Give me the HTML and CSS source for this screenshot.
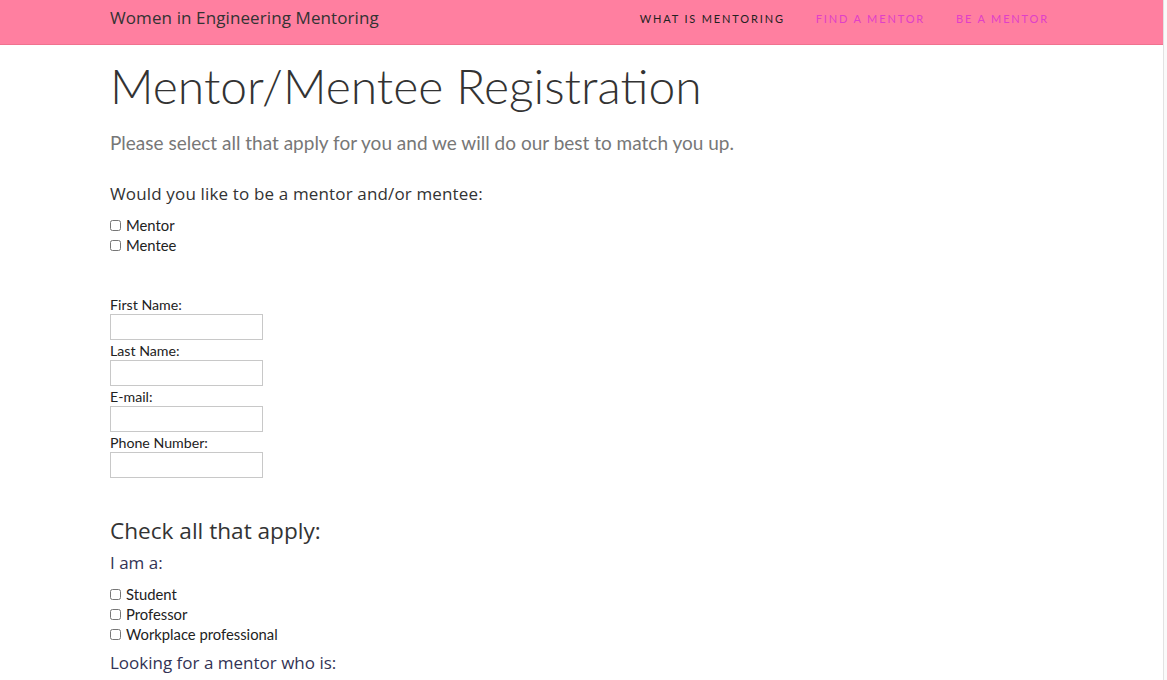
FILE: index.html
```html
<!DOCTYPE html>
<html>
<head>
<meta charset="utf-8">
<link rel="stylesheet" href="styles.css">
</head>
<body>
<div class="page">
  <nav class="navbar">
    <div class="container nav-inner">
      <a class="brand">Women in Engineering Mentoring</a>
      <ul class="nav-links">
        <li class="active">WHAT IS MENTORING</li>
        <li>FIND A MENTOR</li>
        <li>BE A MENTOR</li>
      </ul>
    </div>
  </nav>
  <main class="container">
    <h1 class="title">Mentor/Mentee Registration</h1>
    <p class="lead">Please select all that apply for you and we will do our best to match you up.</p>

    <h3 class="question">Would you like to be a mentor and/or mentee:</h3>
    <div class="checks">
      <label class="check"><input type="checkbox"> Mentor</label>
      <label class="check"><input type="checkbox"> Mentee</label>
    </div>

    <div class="fields">
      <label class="field-label">First Name:</label>
      <input class="text-input" type="text">
      <label class="field-label">Last Name:</label>
      <input class="text-input" type="text">
      <label class="field-label">E-mail:</label>
      <input class="text-input" type="text">
      <label class="field-label">Phone Number:</label>
      <input class="text-input" type="text">
    </div>

    <h2 class="section">Check all that apply:</h2>
    <h4 class="sub">I am a:</h4>
    <div class="checks">
      <label class="check"><input type="checkbox"> Student</label>
      <label class="check"><input type="checkbox"> Professor</label>
      <label class="check"><input type="checkbox"> Workplace professional</label>
    </div>
    <h4 class="sub sub2">Looking for a mentor who is:</h4>
  </main>
</div>
</body>
</html>
```
FILE: styles.css
```css
html, body {
  margin: 0;
  padding: 0;
  height: 100%;
  overflow: hidden;
  background: #fafafa;
}
body {
  font-family: Lato, "Liberation Sans", sans-serif;
  color: #333;
}
.page {
  width: 1163px;
  min-height: 100%;
  background: #fff;
  border-right: 1px solid #e2e2e2;
}
.container {
  padding-left: 110px;
  padding-right: 114px;
}
.navbar {
  background: #ff7fa0;
  border-bottom: 1px solid #f0728f;
  height: 44px;
}
.nav-inner {
  display: flex;
  align-items: center;
  justify-content: space-between;
  height: 44px;
}
.brand {
  font-family: "Open Sans", sans-serif;
  font-size: 17px;
  color: #333;
  letter-spacing: 0.1px;
  margin-top: -9px;
}
.nav-links {
  display: flex;
  list-style: none;
  margin: -7px 0 0 0;
  padding: 0;
  gap: 31px;
  font-family: Lato, sans-serif;
  font-size: 11px;
  letter-spacing: 1.85px;
  color: #e040c8;
}
.nav-links .active {
  color: #222;
}
.title {
  font-family: Lato, sans-serif;
  font-weight: 300;
  font-size: 48px;
  margin: 13px 0 0 0;
  line-height: 56px;
  color: #333;
}
.lead {
  font-size: 19px;
  color: #777;
  margin: 17px 0 0 0;
  line-height: 24px;
}
.question {
  font-family: "Open Sans", sans-serif;
  font-weight: 400;
  font-size: 17px;
  letter-spacing: 0.15px;
  margin: 27px 0 0 0;
  line-height: 24px;
  color: #333;
}
.checks {
  display: flex;
  flex-direction: column;
  margin-top: 9px;
}
.check {
  display: flex;
  align-items: center;
  font-size: 14.8px;
  line-height: 20px;
  color: #222;
}
.check input {
  width: 11px;
  height: 11px;
  margin: 1px 5px 0 0;
}
.fields {
  display: flex;
  flex-direction: column;
  align-items: flex-start;
  margin-top: 41px;
}
.field-label {
  font-size: 14.2px;
  line-height: 18px;
  color: #222;
}
.text-input {
  width: 153px;
  height: 26px;
  box-sizing: border-box;
  border: 1px solid #c8c8c8;
  margin: 0 0 2px 0;
  padding: 0;
}
.section {
  font-family: "Open Sans", sans-serif;
  font-weight: 400;
  font-size: 22.6px;
  margin: 36px 0 0 0;
  line-height: 30px;
  color: #333;
}
.sub {
  font-family: "Open Sans", sans-serif;
  font-weight: 400;
  font-size: 17px;
  margin: 5px 0 0 0;
  line-height: 24px;
  color: #333355;
}
.sub2 {
  margin-top: 7px;
}
```
